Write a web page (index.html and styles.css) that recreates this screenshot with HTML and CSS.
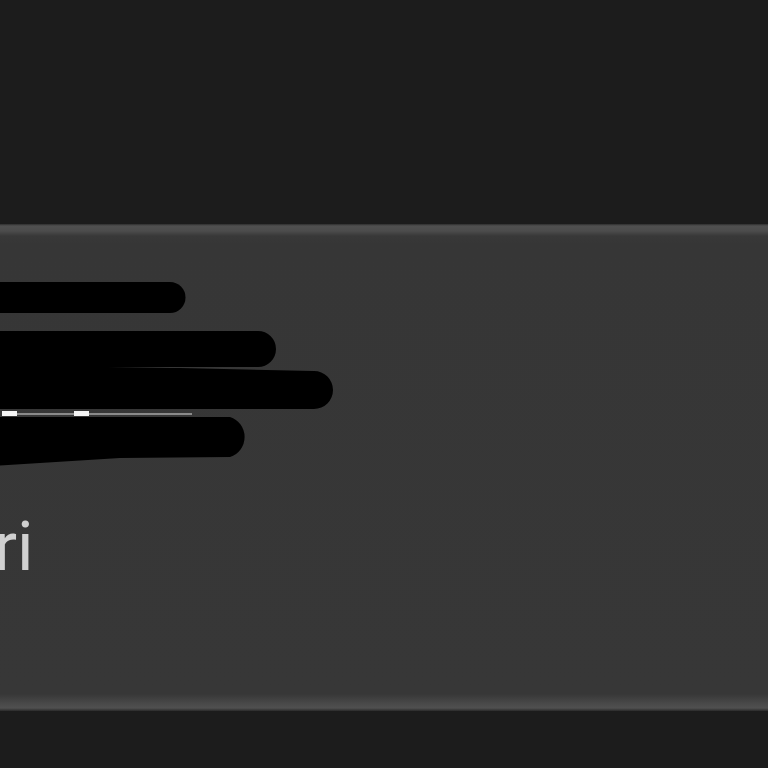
FILE: index.html
```html
<!DOCTYPE html>
<html lang="en">
<head>
    <meta charset="UTF-8">
    <meta name="viewport" content="width=device-width, initial-scale=1.0">
    <title>Safari</title>
    <link rel="stylesheet" href="styles.css">
</head>
<body>
    <div class="top-area"></div>

    <section class="panel">
        <div class="panel-body">
            <div class="lines">
                <div class="line"></div>
                <div class="line"></div>
                <div class="line dashed"><span class="dash"></span><span class="dash"></span></div>
            </div>
            <p class="app-name">ri</p>
        </div>

        <!-- redaction marks drawn over the content -->
        <svg class="redact" width="340" height="200" viewBox="0 0 340 200">
            <path d="M-10 12 H170 A15 15 0 0 1 170 43 H-10 Z" fill="#000"/>
            <path d="M-10 61 H258 A18 18 0 0 1 258 97 H170 L-10 100 Z" fill="#000"/>
            <path d="M-10 98 H180 L314 101 A19 19 0 0 1 314 139 L-10 139 Z" fill="#000"/>
            <path d="M-10 147 H230 A21 21 0 0 1 230 187 L120 188 L-10 196 Z" fill="#000"/>
        </svg>
    </section>

    <div class="bottom-area"></div>
</body>
</html>
```

FILE: styles.css
```css
body {
    margin: 0;
    padding: 0;
    background: #1c1c1c;
    font-family: Roboto, "Noto Sans", sans-serif;
    overflow: hidden;
}

.top-area {
    height: 224px;
}

.panel {
    position: relative;
    height: 487px;
    box-sizing: border-box;
    background: linear-gradient(#2e2e2e 0, #505050 2px, #4c4c4c 7px, #383838 12px, #363636 20px,
        #373737 470px, #4a4a4a 480px, #505050 484px, #2a2a2a 487px);
}

.panel-body {
    padding-top: 58px;
}

.lines {
    display: flex;
    flex-direction: column;
    gap: 30px;
    padding-left: 2px;
}

.line {
    height: 2px;
}

.line.dashed {
    display: flex;
    gap: 57px;
    margin-top: 65px;
    height: 5px;
    background: linear-gradient(to right, #8a8a8a, #8a8a8a 190px, transparent 190px);
    background-size: 100% 2px;
    background-position: 0 2px;
    background-repeat: no-repeat;
    width: 200px;
}

.dash {
    width: 15px;
    height: 5px;
    background: #f4f4f4;
}

.app-name {
    margin: 97px 0 0 -6px;
    font-size: 68px;
    line-height: 68px;
    color: #d0d0d0;
}

.redact {
    position: absolute;
    left: 0;
    top: 46px;
}

.bottom-area {
    height: 57px;
}
```
